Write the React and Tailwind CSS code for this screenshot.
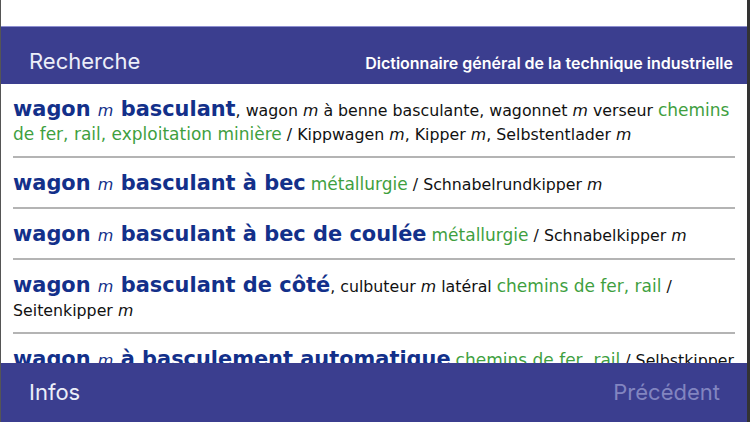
import React from "react";

const M = () => <i className="font-normal italic">m</i>;
const Mh = () => <i className="font-normal italic text-[16px]">m</i>;

function Row({ children }) {
  return (
    <div className="px-3">
      <div className="pt-[13px] pb-[10px] text-[15.8px] leading-[23px] text-[#111]">{children}</div>
      <div className="h-[2px] bg-[#b4b4b4]" />
    </div>
  );
}

const H = ({ children }) => (
  <span className="font-bold text-[20.9px] leading-[24px] text-[#13308a]">{children}</span>
);
const G = ({ children }) => <span className="text-[17px] leading-[18px] text-[#3f9f3f]">{children}</span>;

export default function App() {
  return (
    <div className="w-[750px] h-[422px] flex flex-col bg-white overflow-hidden border-l border-l-[#555] border-r-[3px] border-r-[#333]">
      <div className="h-[26px] bg-white shrink-0" />
      <div className="h-[58px] shrink-0 bg-[#3b3e8f] border-t border-t-[#8d8fd0] flex items-end justify-between pl-7 pr-[14px] pb-[9px] font-['Inter',sans-serif]">
        <span className="text-[22px] leading-[28px] text-[#eceef9]">Recherche</span>
        <span className="text-[16px] leading-[24px] font-semibold text-white">Dictionnaire général de la technique industrielle</span>
      </div>
      <div className="flex-1 overflow-hidden font-['DejaVu_Sans','Verdana',sans-serif]">
        <Row>
          <H>wagon <Mh /> basculant</H>, wagon <M /> à benne basculante, wagonnet <M /> verseur <G>chemins de fer, rail, exploitation minière</G> / Kippwagen <M />, Kipper <M />, Selbstentlader <M />
        </Row>
        <Row>
          <H>wagon <Mh /> basculant à bec</H> <G>métallurgie</G> / Schnabelrundkipper <M />
        </Row>
        <Row>
          <H>wagon <Mh /> basculant à bec de coulée</H> <G>métallurgie</G> / Schnabelkipper <M />
        </Row>
        <Row>
          <H>wagon <Mh /> basculant de côté</H>, culbuteur <M /> latéral <G>chemins de fer, rail</G> / Seitenkipper <M />
        </Row>
        <Row>
          <H>wagon <Mh /> à basculement automatique</H> <G>chemins de fer, rail</G> / Selbstkipper <M />
        </Row>
      </div>
      <div className="h-[59px] shrink-0 bg-[#3b3e8f] flex items-center justify-between pl-7 pr-[27px] font-['Inter',sans-serif]">
        <span className="text-[22px] text-[#eceef9]">Infos</span>
        <span className="text-[22px] text-[#8285c0]">Précédent</span>
      </div>
    </div>
  );
}
